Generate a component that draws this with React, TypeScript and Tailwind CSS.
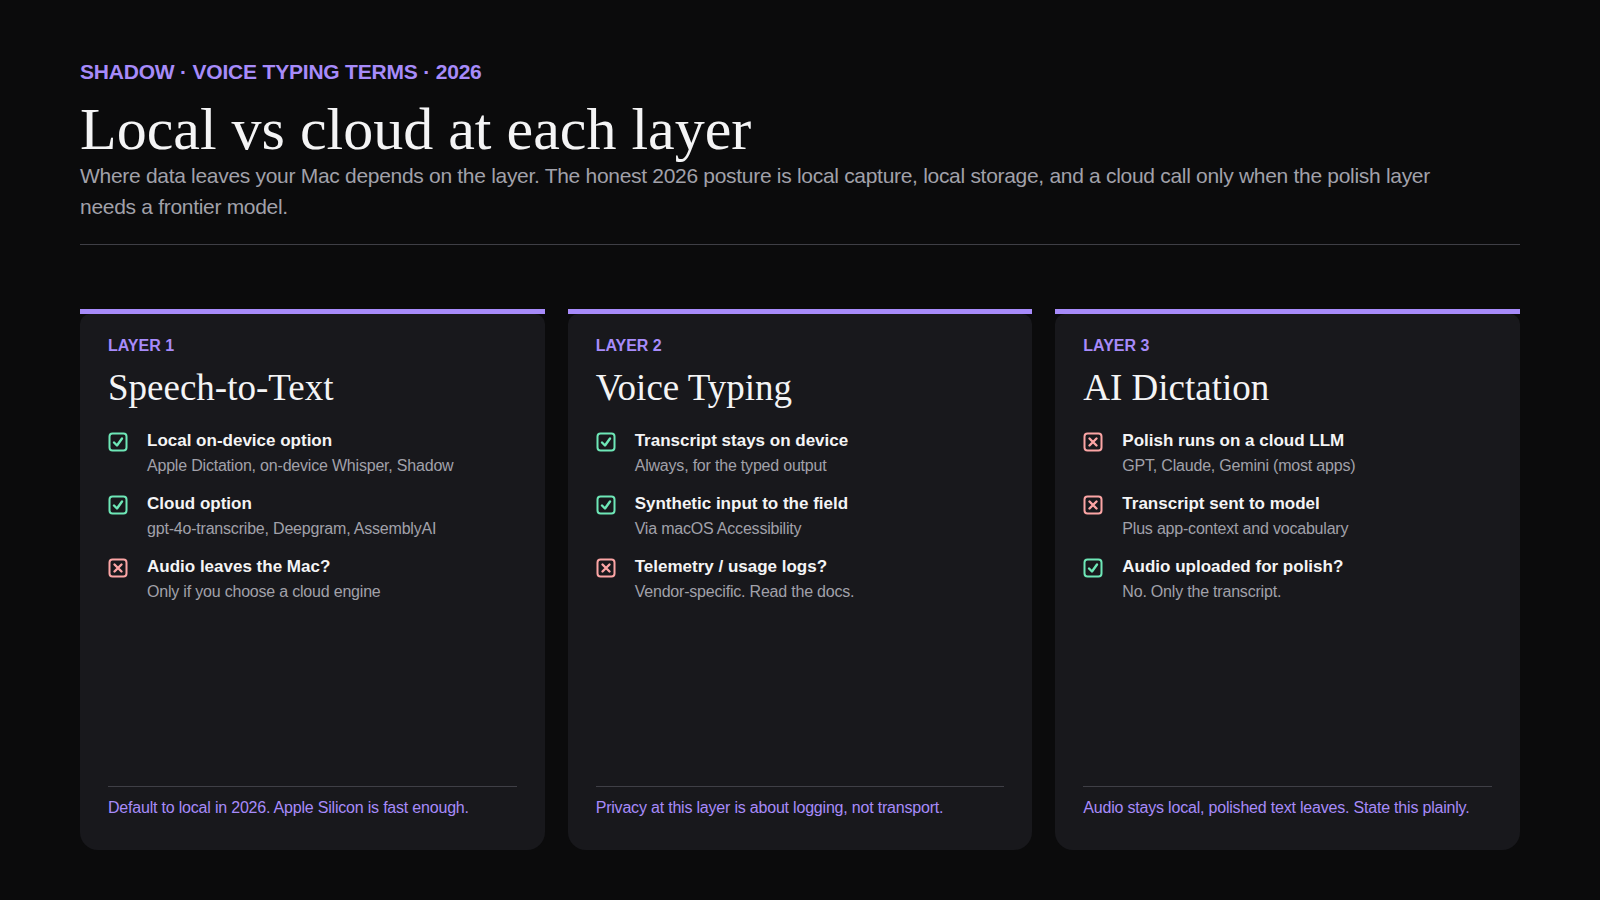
const cards = [
  {
    layer: "LAYER 1",
    title: "Speech-to-Text",
    items: [
      { ok: true, t: "Local on-device option", s: "Apple Dictation, on-device Whisper, Shadow" },
      { ok: true, t: "Cloud option", s: "gpt-4o-transcribe, Deepgram, AssemblyAI" },
      { ok: false, t: "Audio leaves the Mac?", s: "Only if you choose a cloud engine" },
    ],
    foot: "Default to local in 2026. Apple Silicon is fast enough.",
  },
  {
    layer: "LAYER 2",
    title: "Voice Typing",
    items: [
      { ok: true, t: "Transcript stays on device", s: "Always, for the typed output" },
      { ok: true, t: "Synthetic input to the field", s: "Via macOS Accessibility" },
      { ok: false, t: "Telemetry / usage logs?", s: "Vendor-specific. Read the docs." },
    ],
    foot: "Privacy at this layer is about logging, not transport.",
  },
  {
    layer: "LAYER 3",
    title: "AI Dictation",
    items: [
      { ok: false, t: "Polish runs on a cloud LLM", s: "GPT, Claude, Gemini (most apps)" },
      { ok: false, t: "Transcript sent to model", s: "Plus app-context and vocabulary" },
      { ok: true, t: "Audio uploaded for polish?", s: "No. Only the transcript." },
    ],
    foot: "Audio stays local, polished text leaves. State this plainly.",
  },
];

const serif = { fontFamily: '"Liberation Serif", serif' };

const Mark = ({ ok }: { ok: boolean }) => (
  <svg width="20" height="20" viewBox="0 0 20 20" className="mt-[2px] shrink-0">
    <rect x="1.5" y="1.5" width="17" height="17" rx="3" fill="none" stroke={ok ? "#6ee7b7" : "#fca5a5"} strokeWidth="2" />
    {ok ? (
      <path d="M6 10.5l3 3 5-7" fill="none" stroke="#6ee7b7" strokeWidth="2.4" strokeLinecap="round" strokeLinejoin="round" />
    ) : (
      <path d="M6.5 6.5l7 7M13.5 6.5l-7 7" fill="none" stroke="#fca5a5" strokeWidth="2.4" strokeLinecap="round" />
    )}
  </svg>
);

export default function App() {
  return (
    <div
      className="w-[1600px] h-[900px] bg-[#0b0b0c] px-20 pt-[56px] overflow-hidden"
      style={{ fontFamily: '"Liberation Sans", Arial, sans-serif' }}
    >
      <div className="text-[21px] font-bold text-[#a78bfa] tracking-[-0.2px]">SHADOW · VOICE TYPING TERMS · 2026</div>
      <h1 className="mt-[10px] text-[60px] leading-[62px] text-[#f4f4f5]" style={serif}>Local vs cloud at each layer</h1>
      <p className="mt-[0px] text-[21px] leading-[31px] text-[#a1a1aa] tracking-[-0.3px] pr-[40px]">
        Where data leaves your Mac depends on the layer. The honest 2026 posture is local capture, local storage, and a cloud call only when the polish layer needs a frontier model.
      </p>
      <div className="mt-[22px] border-t border-[#3f3f46]" />
      <div className="mt-[64px] grid grid-cols-3 gap-[23px]">
        {cards.map((c) => (
          <div key={c.layer} className="flex flex-col">
            <div className="h-[5px] bg-[#a78bfa]" />
            <div className="h-[536px] bg-[#18181c] rounded-b-[18px] rounded-t-[10px] px-[28px] pt-[20px] pb-[30px] flex flex-col">
              <div className="text-[16px] font-bold text-[#a78bfa]">{c.layer}</div>
              <div className="mt-[8px] text-[37px] leading-[44px] text-[#f4f4f5]" style={serif}>{c.title}</div>
              <div className="mt-[20px] flex flex-col gap-[16px]">
                {c.items.map((it) => (
                  <div key={it.t} className="flex gap-[19px]">
                    <Mark ok={it.ok} />
                    <div>
                      <div className="text-[17px] leading-[22px] font-bold text-[#f4f4f5]">{it.t}</div>
                      <div className="mt-[3px] text-[16px] leading-[22px] text-[#a1a1aa] tracking-[-0.2px]">{it.s}</div>
                    </div>
                  </div>
                ))}
              </div>
              <div className="mt-auto border-t border-[#3f3f46] pt-[9px] text-[16px] text-[#a78bfa] tracking-[-0.2px]">{c.foot}</div>
            </div>
          </div>
        ))}
      </div>
    </div>
  );
}
